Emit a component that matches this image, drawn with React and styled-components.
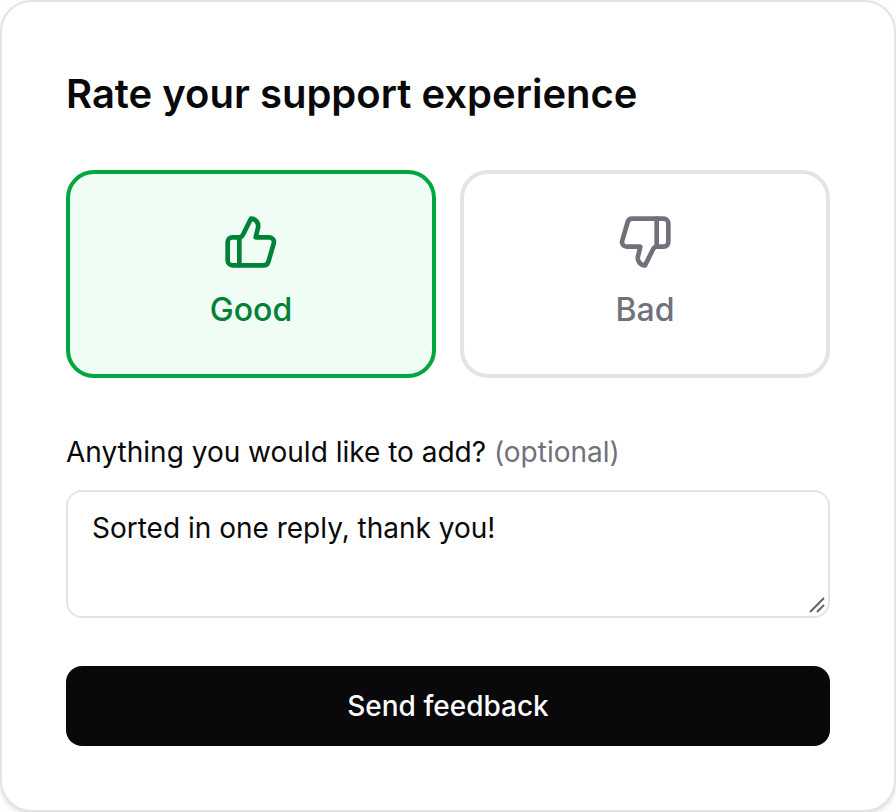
import React, { useState } from "react";
import styled, { createGlobalStyle } from "styled-components";
import { ThumbsUp, ThumbsDown } from "lucide-react";

const options = [
  { value: "good", label: "Good", Icon: ThumbsUp },
  { value: "bad", label: "Bad", Icon: ThumbsDown },
];

const App = () => {
  const [rating, setRating] = useState("good");
  const [comment, setComment] = useState("Sorted in one reply, thank you!");

  return (
    <>
      <GlobalStyle />
      <Card onSubmit={(e) => e.preventDefault()}>
        <Title>Rate your support experience</Title>
        <Options>
          {options.map(({ value, label, Icon }) => (
            <Option
              key={value}
              type="button"
              aria-pressed={rating === value}
              $active={rating === value}
              onClick={() => setRating(value)}
            >
              <Icon size={56} strokeWidth={2} />
              {label}
            </Option>
          ))}
        </Options>
        <Field>
          <Label htmlFor="comment">
            Anything you would like to add? <Optional>(optional)</Optional>
          </Label>
          <CommentBox>
            <Comment
              id="comment"
              value={comment}
              onChange={(e) => setComment(e.target.value)}
            />
            <Grip viewBox="0 0 16 16" aria-hidden="true">
              <path d="M1 15 15 1M8 15l7-7" />
            </Grip>
          </CommentBox>
        </Field>
        <Submit type="submit">Send feedback</Submit>
      </Card>
    </>
  );
};

const GlobalStyle = createGlobalStyle`
  * {
    box-sizing: border-box;
  }

  body {
    margin: 0;
    background: #fff;
    color: #09090b;
    font-family: Inter, sans-serif;
  }

  button,
  textarea {
    font-family: inherit;
  }
`;

const Card = styled.form`
  padding: 64px;
  background: #fff;
  border: 2px solid #e4e4e7;
  border-radius: 32px;
  box-shadow: 0 2px 6px #0000001a, 0 2px 4px -2px #0000001a;
`;

const Title = styled.h1`
  margin: 0;
  font-size: 40px;
  font-weight: 600;
  line-height: 56px;
`;

const Options = styled.div`
  display: grid;
  grid-template-columns: 1fr 1fr;
  gap: 24px;
  margin-top: 48px;
`;

const Option = styled.button`
  display: flex;
  flex-direction: column;
  align-items: center;
  gap: 16px;
  padding: 40px 24px;
  border: 4px solid ${({ $active }) => ($active ? "#00a63e" : "#e4e4e7")};
  border-radius: 28px;
  background: ${({ $active }) => ($active ? "#f0fdf4" : "#fff")};
  color: ${({ $active }) => ($active ? "#008236" : "#71717b")};
  font-size: 32px;
  font-weight: 500;
  line-height: 48px;
  cursor: pointer;
`;

const Field = styled.div`
  display: flex;
  flex-direction: column;
  gap: 20px;
  margin-top: 56px;
`;

const Label = styled.label`
  font-size: 28px;
  line-height: 36px;
`;

const Optional = styled.span`
  color: #71717b;
`;

const CommentBox = styled.div`
  position: relative;
  display: flex;
`;

const Comment = styled.textarea`
  width: 100%;
  height: 128px;
  padding: 16px 24px;
  border: 2px solid #e4e4e7;
  border-radius: 16px;
  background: #fff;
  color: #09090b;
  font-size: 28px;
  line-height: 40px;
  resize: vertical;
  outline: none;

  &::-webkit-resizer {
    background: transparent;
  }
`;

const Grip = styled.svg`
  position: absolute;
  right: 5px;
  bottom: 5px;
  width: 16px;
  height: 16px;
  fill: none;
  stroke: #636363;
  stroke-width: 2;
  pointer-events: none;
`;

const Submit = styled.button`
  width: 100%;
  height: 80px;
  margin-top: 48px;
  border: 0;
  border-radius: 16px;
  background: #09090b;
  color: #fafafa;
  font-size: 28px;
  font-weight: 500;
  cursor: pointer;
`;

export default App;
